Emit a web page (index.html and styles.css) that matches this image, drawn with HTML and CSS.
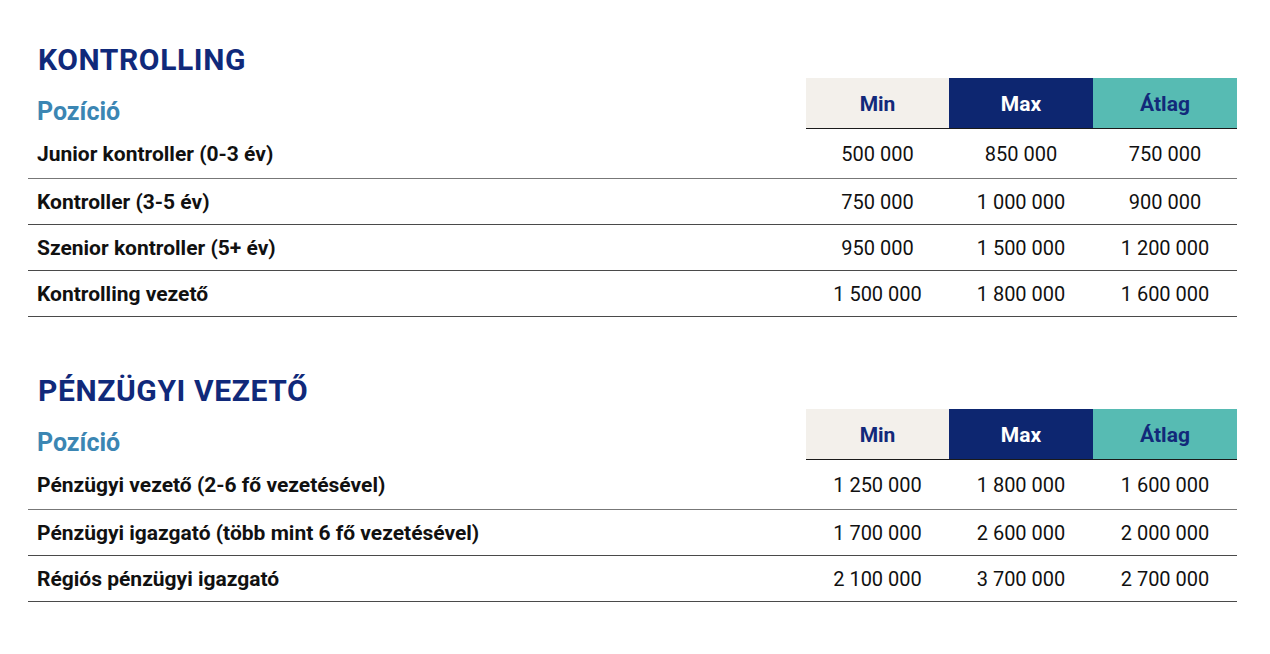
FILE: index.html
```html
<!DOCTYPE html>
<html lang="hu">
<head>
<meta charset="utf-8">
<title>Fizetések</title>
<link rel="stylesheet" href="styles.css">
</head>
<body>
<main class="page">
  <section class="block">
    <h2 class="title">KONTROLLING</h2>
    <div class="table">
      <div class="head-label">Pozíció</div>
      <div class="head min">Min</div>
      <div class="head max">Max</div>
      <div class="head avg">Átlag</div>

      <div class="row first">
        <div class="cell label">Junior kontroller (0-3 év)</div>
        <div class="cell num">500 000</div>
        <div class="cell num">850 000</div>
        <div class="cell num">750 000</div>
      </div>
      <div class="row">
        <div class="cell label">Kontroller (3-5 év)</div>
        <div class="cell num">750 000</div>
        <div class="cell num">1 000 000</div>
        <div class="cell num">900 000</div>
      </div>
      <div class="row">
        <div class="cell label">Szenior kontroller (5+ év)</div>
        <div class="cell num">950 000</div>
        <div class="cell num">1 500 000</div>
        <div class="cell num">1 200 000</div>
      </div>
      <div class="row">
        <div class="cell label">Kontrolling vezető</div>
        <div class="cell num">1 500 000</div>
        <div class="cell num">1 800 000</div>
        <div class="cell num">1 600 000</div>
      </div>
    </div>
  </section>

  <section class="block second">
    <h2 class="title">PÉNZÜGYI VEZETŐ</h2>
    <div class="table">
      <div class="head-label">Pozíció</div>
      <div class="head min">Min</div>
      <div class="head max">Max</div>
      <div class="head avg">Átlag</div>

      <div class="row first">
        <div class="cell label">Pénzügyi vezető (2-6 fő vezetésével)</div>
        <div class="cell num">1 250 000</div>
        <div class="cell num">1 800 000</div>
        <div class="cell num">1 600 000</div>
      </div>
      <div class="row">
        <div class="cell label">Pénzügyi igazgató (több mint 6 fő vezetésével)</div>
        <div class="cell num">1 700 000</div>
        <div class="cell num">2 600 000</div>
        <div class="cell num">2 000 000</div>
      </div>
      <div class="row">
        <div class="cell label">Régiós pénzügyi igazgató</div>
        <div class="cell num">2 100 000</div>
        <div class="cell num">3 700 000</div>
        <div class="cell num">2 700 000</div>
      </div>
    </div>
  </section>
</main>
</body>
</html>
```

FILE: styles.css
```css
* { box-sizing: border-box; }

html, body {
  margin: 0;
  padding: 0;
  background: #ffffff;
}

body {
  font-family: Roboto, "Liberation Sans", Arial, sans-serif;
  color: #111111;
}

.page {
  padding: 42px 0 0 28px;
  width: 1237px;
}

.block.second {
  margin-top: 56px;
}

.title {
  margin: 0;
  padding-left: 10px;
  font-size: 30px;
  line-height: 36px;
  font-weight: 700;
  color: #10297a;
  letter-spacing: 0.6px;
}

.table {
  display: grid;
  grid-template-columns: 778px 143px 144px 144px;
}

.head-label {
  display: flex;
  align-items: flex-end;
  padding: 0 0 3px 9px;
  font-size: 25px;
  line-height: 28px;
  font-weight: 700;
  color: #3b86b3;
}

.head {
  height: 51px;
  display: flex;
  align-items: center;
  justify-content: center;
  padding-top: 2px;
  font-size: 21px;
  font-weight: 700;
  color: #12297a;
  border-bottom: 1px solid #1a1a1a;
}

.head.min { background: #f3f0eb; }
.head.max { background: #0d2670; color: #ffffff; }
.head.avg { background: #57bbb3; }

.row {
  grid-column: 1 / -1;
  display: grid;
  grid-template-columns: subgrid;
  height: 46px;
  border-bottom: 1px solid #4a4a4a;
}

.row.first {
  height: 50px;
  border-bottom-color: #777777;
}

.cell {
  display: flex;
  align-items: center;
}

.cell.label {
  padding-left: 9px;
  font-size: 21px;
  font-weight: 700;
}

.cell.num {
  justify-content: center;
  font-size: 20px;
  font-weight: 400;
}
```
